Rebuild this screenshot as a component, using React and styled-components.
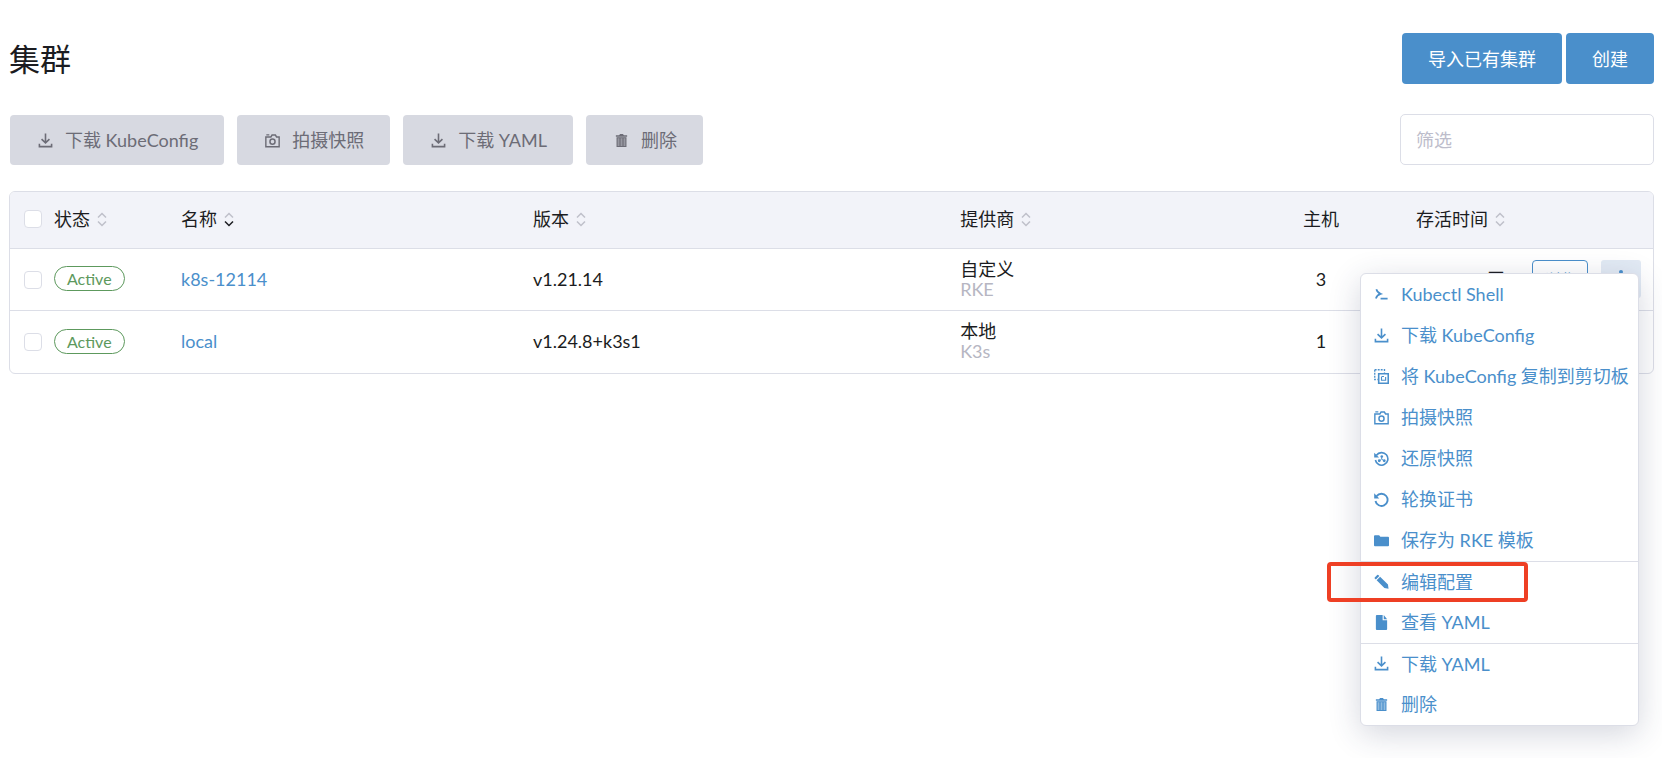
import React from "react";
import styled, { createGlobalStyle, css } from "styled-components";

const theme = {
  primary: "#4a8fcb",
  text: "#1b1c21",
  muted: "#b6b6c2",
  border: "#dcdee7",
  header: "#f2f3f9",
  disabled: "#d7d9e1",
  disabledText: "#6c6c76",
  success: "#5d995d",
  danger: "#ee3f24",
};

const GlobalStyle = createGlobalStyle`
  * {
    box-sizing: border-box;
  }
  body {
    margin: 0;
    background: #fff;
    color: ${theme.text};
    font-family: Lato, "Noto Sans CJK SC", sans-serif;
    font-size: 18px;
    line-height: 20px;
  }
  button, input {
    font: inherit;
  }
`;

const Page = styled.main`
  min-height: 100vh;
  padding: 33px 8px 32px 9px;
`;

const Header = styled.header`
  display: flex;
  justify-content: space-between;
  align-items: center;
  height: 51px;
`;

const Title = styled.h1`
  margin: 0;
  font-size: 31px;
  line-height: 40px;
  font-weight: 400;
`;

const HeaderActions = styled.div`
  display: flex;
  gap: 4px;
`;

const PrimaryButton = styled.button`
  height: 51px;
  padding: 0 26px;
  border: 0;
  border-radius: 4px;
  background: ${theme.primary};
  color: #fff;
  cursor: pointer;
`;

const Toolbar = styled.div`
  display: flex;
  justify-content: space-between;
  align-items: flex-end;
  margin: 30px 0 26px;
`;

const BulkActions = styled.div`
  display: flex;
  gap: 13px;
  padding-left: 1px;
`;

const BulkButton = styled.button`
  display: flex;
  align-items: center;
  gap: 12px;
  height: 50px;
  padding: 0 26px 0 28px;
  border: 0;
  border-radius: 4px;
  background: ${theme.disabled};
  color: ${theme.disabledText};
`;

const Filter = styled.input`
  width: 254px;
  height: 51px;
  padding: 0 15px;
  border: 1px solid ${theme.border};
  border-radius: 5px;
  outline: 0;
  color: ${theme.text};

  &::placeholder {
    color: #bdbdcb;
    opacity: 1;
  }
`;

const TableFrame = styled.div`
  border: 1px solid ${theme.border};
  border-radius: 6px;
`;

const Table = styled.table`
  width: 100%;
  table-layout: fixed;
  border-collapse: separate;
  border-spacing: 0;
`;

const Col = styled.col`
  width: ${({ $width }) => $width};
`;

const Th = styled.th`
  height: 57px;
  padding: 0 0 3px;
  background: ${theme.header};
  border-bottom: 1px solid ${theme.border};
  text-align: ${({ $align }) => $align || "left"};
  font-weight: 400;
  white-space: nowrap;

  &:first-child {
    padding-left: 14px;
    border-top-left-radius: 5px;
  }
  &:last-child {
    border-top-right-radius: 5px;
  }
`;

const Td = styled.td`
  height: 62px;
  padding: 0 0 2px;
  text-align: ${({ $align }) => $align || "left"};

  &:first-child {
    padding: 0 0 0 14px;
  }
  tr:not(:last-child) > & {
    border-bottom: 1px solid ${theme.border};
  }
`;

const SortLabel = styled.span`
  display: inline-flex;
  align-items: center;
  gap: 7px;
`;

const Checkbox = styled.input`
  appearance: none;
  display: block;
  width: 18px;
  height: 18px;
  margin: 0;
  border: 1px solid ${theme.border};
  border-radius: 4px;
  background: #fff;
`;

const Badge = styled.span`
  display: inline-block;
  padding: 0 12px;
  border: 1px solid ${theme.success};
  border-radius: 13px;
  color: ${theme.success};
  font-size: 16px;
  line-height: 23px;
`;

const ClusterLink = styled.a`
  color: ${theme.primary};
  text-decoration: none;
`;

const Distro = styled.div`
  color: ${theme.muted};
`;

const RowActions = styled.div`
  position: relative;
  display: flex;
  justify-content: flex-end;
  align-items: center;
  gap: 13px;
  padding-right: 12px;
`;

const ExploreButton = styled.button`
  width: 56px;
  height: 38px;
  padding: 0;
  border: 1px solid ${theme.primary};
  border-radius: 4px;
  background: #fff;
  color: ${theme.primary};
  font-size: 15px;
`;

const MoreButton = styled.button`
  display: flex;
  align-items: center;
  justify-content: center;
  width: 40px;
  height: 38px;
  padding: 0;
  border: 0;
  border-radius: 3px;
  background: #e2eaf4;
  color: ${theme.primary};
`;

const Menu = styled.ul`
  position: absolute;
  z-index: 10;
  top: 13px;
  right: 14px;
  margin: 0;
  padding: 0;
  width: 279px;
  border: 1px solid ${theme.border};
  border-radius: 6px;
  background: #fff;
  box-shadow: 0 8px 32px rgba(40, 50, 90, 0.2);
  list-style: none;
`;

const MenuItem = styled.li`
  position: relative;
  height: 41px;
  ${({ $divided }) =>
    $divided &&
    css`
      border-top: 1px solid ${theme.border};
    `}
`;

const MenuButton = styled.button`
  display: flex;
  align-items: center;
  gap: 12px;
  width: 100%;
  height: 100%;
  padding: 0 0 0 13px;
  border: 0;
  background: transparent;
  color: ${theme.primary};
  text-align: left;
  white-space: nowrap;
  cursor: pointer;
`;

const Highlight = styled.span`
  position: absolute;
  top: 0;
  left: -34px;
  width: 201px;
  height: 40px;
  border: 4px solid ${theme.danger};
  border-radius: 4px;
  pointer-events: none;
`;

const Svg = styled.svg`
  flex: none;
  display: block;
`;

const glyphs = {
  shell: (
    <path d="M2.5 2.5Q3.5 6 7 7.3 3 8.6 2 12.2M7 12.4h7.5" fill="none" stroke="currentColor" strokeWidth="1.8" />
  ),
  download: (
    <path
      d="M8 .5v10M3.8 6.6 8 10.6l4.2-4M1.5 11.5v3h13v-3"
      fill="none"
      stroke="currentColor"
      strokeWidth="1.7"
    />
  ),
  copy: (
    <>
      <path
        d="M.8 .8h10.4v3M.8 .8v10.4h3"
        fill="none"
        stroke="currentColor"
        strokeWidth="1.4"
        strokeDasharray="2 1.2"
      />
      <path d="M5 5h10.2v10.2H5z" fill="none" stroke="currentColor" strokeWidth="1.7" />
      <path d="M8 8.4V12h4.4V8.6M8 8h2.6" fill="none" stroke="currentColor" strokeWidth="1.2" />
    </>
  ),
  snapshot: (
    <>
      <path
        d="M.9 14.6V4.2h5.4l1.2-2h3.6l1.2 2h2.8v10.4zM1.4 2h3.2"
        fill="none"
        stroke="currentColor"
        strokeWidth="1.5"
      />
      <circle cx="8" cy="9.2" r="2.7" fill="none" stroke="currentColor" strokeWidth="1.6" />
    </>
  ),
  restore: (
    <>
      <path d="M2.6 4.6A6.7 6.7 0 1 1 1.5 9.6" fill="none" stroke="currentColor" strokeWidth="1.7" />
      <path d="M.2 1.8v5.2h5.2z" fill="currentColor" />
      <path d="M8.2 6v2.6L6 10.5M8.2 8.6l2.4 1.9" fill="none" stroke="currentColor" strokeWidth="1" />
      <circle cx="8.3" cy="5.9" r="1.4" fill="currentColor" />
      <circle cx="5.6" cy="10.4" r="1.5" fill="currentColor" />
      <circle cx="10.9" cy="10.4" r="1.5" fill="currentColor" />
    </>
  ),
  rotate: (
    <>
      <path d="M2.8 4.4A6.5 6.5 0 1 1 1.6 9.6" fill="none" stroke="currentColor" strokeWidth="2" />
      <path d="M.2 1.4v5.4h5.4z" fill="currentColor" />
    </>
  ),
  folder: (
    <path d="M0 3.5q0-1 1-1h4.5L6.8 4H15q1 0 1 1v8q0 1-1 1H1q-1 0-1-1z" fill="currentColor" />
  ),
  edit: (
    <path
      d="M.8 3.6 3.4 1q.6-.5 1.2 0l1.1 1.2-3.7 3.7L.8 4.8q-.5-.6 0-1.2zM2.8 6.7 6.5 3l8.4 8.2.6 4.4-4.4-.6z"
      fill="currentColor"
    />
  ),
  file: (
    <path d="M3 0h6.2v5.6H14V15q0 1-1 1H3q-1 0-1-1V1q0-1 1-1zM10.4 0 14 4.4h-3.6z" fill="currentColor" />
  ),
  trash: (
    <>
      <path d="M2 2.4h3.4L6.5 1h3l1.1 1.4H14V4H2z" fill="currentColor" />
      <path
        d="M3.3 5h9.4v9.4H3.3zM6.4 5v9M9.6 5v9"
        fill="currentColor"
        fillOpacity=".6"
        stroke="currentColor"
        strokeWidth="1.2"
      />
    </>
  ),
};

const Icon = ({ name }) => (
  <Svg width="15" height="15" viewBox="0 0 16 16" aria-hidden="true">
    {glyphs[name]}
  </Svg>
);

const SortIcon = ({ active }) => (
  <Svg width="10" height="16" viewBox="0 0 10 16" fill="none" strokeWidth="1.5" aria-hidden="true">
    <path d="M1 6.5 5 2.5l4 4" stroke="#bfc0ca" />
    <path d="m1 10.5 4 4 4-4" stroke={active ? theme.text : "#bfc0ca"} />
  </Svg>
);

const bulkActions = [
  { icon: "download", label: "下载 KubeConfig" },
  { icon: "snapshot", label: "拍摄快照" },
  { icon: "download", label: "下载 YAML" },
  { icon: "trash", label: "删除" },
];

const columns = [
  { label: "状态", sortable: true },
  { label: "名称", sortable: true, active: true },
  { label: "版本", sortable: true },
  { label: "提供商", sortable: true },
  { label: "主机", align: "center" },
  { label: "存活时间", sortable: true, align: "right" },
];

const clusters = [
  { name: "k8s-12114", version: "v1.21.14", provider: "自定义", distro: "RKE", hosts: 3, age: "天" },
  { name: "local", version: "v1.24.8+k3s1", provider: "本地", distro: "K3s", hosts: 1 },
];

const menuItems = [
  { icon: "shell", label: "Kubectl Shell" },
  { icon: "download", label: "下载 KubeConfig" },
  { icon: "copy", label: "将 KubeConfig 复制到剪切板" },
  { icon: "snapshot", label: "拍摄快照" },
  { icon: "restore", label: "还原快照" },
  { icon: "rotate", label: "轮换证书" },
  { icon: "folder", label: "保存为 RKE 模板" },
  { icon: "edit", label: "编辑配置", divided: true, highlighted: true },
  { icon: "file", label: "查看 YAML" },
  { icon: "download", label: "下载 YAML", divided: true },
  { icon: "trash", label: "删除" },
];

const ActionMenu = () => (
  <Menu>
    {menuItems.map(({ icon, label, divided, highlighted }) => (
      <MenuItem key={label} $divided={divided}>
        <MenuButton type="button">
          <Icon name={icon} />
          {label}
        </MenuButton>
        {highlighted && <Highlight />}
      </MenuItem>
    ))}
  </Menu>
);

const ClusterRow = ({ cluster, menuOpen }) => (
  <tr>
    <Td>
      <Checkbox type="checkbox" aria-label={cluster.name} />
    </Td>
    <Td>
      <Badge>Active</Badge>
    </Td>
    <Td>
      <ClusterLink href="#">{cluster.name}</ClusterLink>
    </Td>
    <Td>{cluster.version}</Td>
    <Td>
      {cluster.provider}
      <Distro>{cluster.distro}</Distro>
    </Td>
    <Td $align="center">{cluster.hosts}</Td>
    <Td $align="right">{cluster.age}</Td>
    <Td>
      {menuOpen && (
        <RowActions>
          <ExploreButton type="button">浏览</ExploreButton>
          <MoreButton type="button" aria-label="更多">
            <Svg width="4" height="18" viewBox="0 0 4 18" fill="currentColor">
              <circle cx="2" cy="2" r="2" />
              <circle cx="2" cy="9" r="2" />
              <circle cx="2" cy="16" r="2" />
            </Svg>
          </MoreButton>
          <ActionMenu />
        </RowActions>
      )}
    </Td>
  </tr>
);

const App = () => (
  <>
    <GlobalStyle />
    <Page>
      <Header>
        <Title>集群</Title>
        <HeaderActions>
          <PrimaryButton type="button">导入已有集群</PrimaryButton>
          <PrimaryButton type="button">创建</PrimaryButton>
        </HeaderActions>
      </Header>
      <Toolbar>
        <BulkActions>
          {bulkActions.map(({ icon, label }) => (
            <BulkButton key={label} type="button" disabled>
              <Icon name={icon} />
              {label}
            </BulkButton>
          ))}
        </BulkActions>
        <Filter type="text" placeholder="筛选" aria-label="筛选" />
      </Toolbar>
      <TableFrame>
        <Table>
          <colgroup>
            <Col $width="44px" />
            <Col $width="127px" />
            <Col $width="352px" />
            <Col $width="26%" />
            <Col $width="auto" />
            <Col $width="80px" />
            <Col $width="144px" />
            <Col $width="148px" />
          </colgroup>
          <thead>
            <tr>
              <Th>
                <Checkbox type="checkbox" aria-label="全选" />
              </Th>
              {columns.map(({ label, sortable, active, align }) => (
                <Th key={label} $align={align}>
                  <SortLabel>
                    {label}
                    {sortable && <SortIcon active={active} />}
                  </SortLabel>
                </Th>
              ))}
              <Th />
            </tr>
          </thead>
          <tbody>
            {clusters.map((cluster, index) => (
              <ClusterRow key={cluster.name} cluster={cluster} menuOpen={index === 0} />
            ))}
          </tbody>
        </Table>
      </TableFrame>
    </Page>
  </>
);

export default App;
